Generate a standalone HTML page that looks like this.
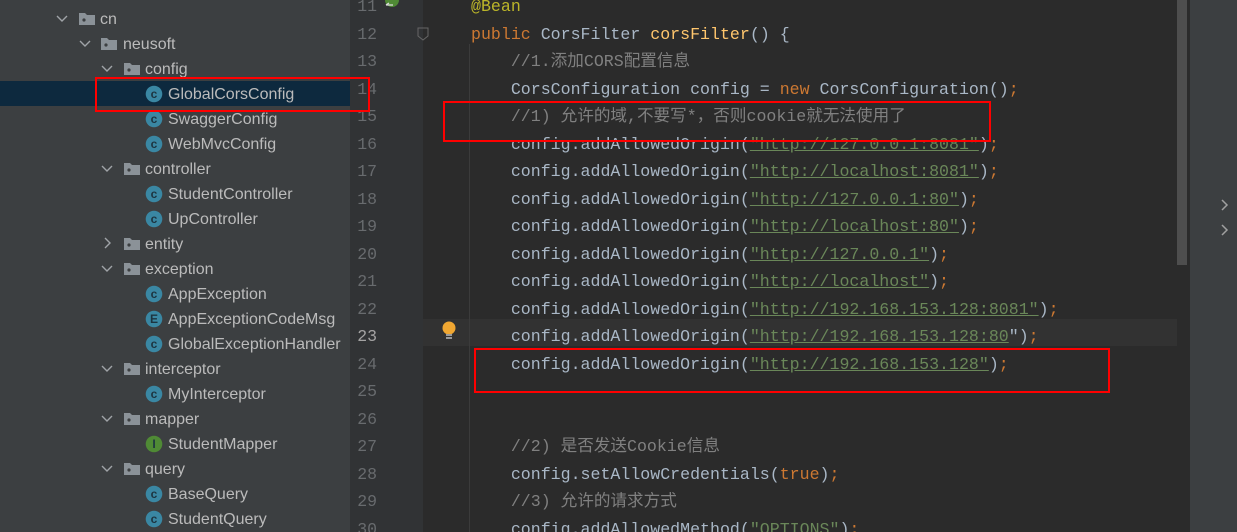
<!DOCTYPE html>
<html style="overflow:hidden"><head><meta charset="utf-8"><style>
*{margin:0;padding:0;box-sizing:border-box}
html,body{width:1237px;height:532px;overflow:hidden}
body{background:#2b2b2b;position:relative;font-family:"Liberation Sans","Noto Sans CJK SC",sans-serif}
#side{position:absolute;left:0;top:0;width:350px;height:532px;background:#3c3f41}
.sel{position:absolute;left:0;top:81px;width:350px;height:25px;background:#0d293e}
#gut{position:absolute;left:350px;top:0;width:73px;height:532px;background:#313335}
.ln{position:absolute;left:350px;width:27px;text-align:right;font:16.5px/27.5px "Liberation Mono",monospace;color:#686b6e}
.cl{position:absolute;left:471px;font:16.6px/27.5px "Liberation Mono","Noto Sans CJK SC",monospace;color:#a9b7c6;white-space:pre}
.k{color:#cc7832}.s{color:#6a8759;text-decoration:underline;text-decoration-color:#6a8759}.c{color:#808080}.a{color:#bbb529}.m{color:#ffc66d}
.box{position:absolute;border:2px solid #f00}
</style></head><body>
<div id="side">
<div class="sel"></div>
</div>
<div id="gut"></div>
<div style="position:absolute;left:423px;top:319px;width:754px;height:27px;background:#323232"></div>
<div style="position:absolute;left:469px;top:44px;width:1px;height:488px;background:#3b3b3b"></div>
<div style="position:absolute;left:1177px;top:0;width:10px;height:265px;background:#4e4e4e"></div>
<div style="position:absolute;left:1190px;top:0;width:47px;height:532px;background:#3c3f41"></div>
<svg style="position:absolute;left:1220px;top:198px" width="10" height="40"><path d="M2 2l5 5-5 5M2 27l5 5-5 5" stroke="#a0a0a0" stroke-width="1.5" fill="none"/></svg>

<svg style="position:absolute;left:0;top:0" width="350" height="532">
<g stroke="#a0a4a8" stroke-width="1.4" fill="none">
<path d="M57 16l5 5 5-5"/><path d="M80 41l5 5 5-5"/><path d="M102 66l5 5 5-5"/><path d="M102 166l5 5 5-5"/><path d="M105 238l5 5-5 5"/><path d="M102 266l5 5 5-5"/><path d="M102 366l5 5 5-5"/><path d="M102 416l5 5 5-5"/><path d="M102 466l5 5 5-5"/>
</g>
<g fill="#8b9298">
<path d="M79 13h6l2 2h8v10h-16z"/><path d="M101 38h6l2 2h8v10h-16z"/><path d="M124 63h6l2 2h8v10h-16z"/><path d="M124 163h6l2 2h8v10h-16z"/><path d="M124 238h6l2 2h8v10h-16z"/><path d="M124 263h6l2 2h8v10h-16z"/><path d="M124 363h6l2 2h8v10h-16z"/><path d="M124 413h6l2 2h8v10h-16z"/><path d="M124 463h6l2 2h8v10h-16z"/>
</g>
<g fill="#3c3f41"><circle cx="84" cy="20" r="1.6"/><circle cx="106" cy="45" r="1.6"/><circle cx="129" cy="70" r="1.6"/><circle cx="129" cy="170" r="1.6"/><circle cx="129" cy="245" r="1.6"/><circle cx="129" cy="270" r="1.6"/><circle cx="129" cy="370" r="1.6"/><circle cx="129" cy="420" r="1.6"/><circle cx="129" cy="470" r="1.6"/></g>
<g fill="#3a87a3"><circle cx="154" cy="94" r="8.3"/><circle cx="154" cy="119" r="8.3"/><circle cx="154" cy="144" r="8.3"/><circle cx="154" cy="194" r="8.3"/><circle cx="154" cy="219" r="8.3"/><circle cx="154" cy="294" r="8.3"/><circle cx="154" cy="319" r="8.3"/><circle cx="154" cy="344" r="8.3"/><circle cx="154" cy="394" r="8.3"/><circle cx="154" cy="494" r="8.3"/><circle cx="154" cy="519" r="8.3"/></g>
<circle cx="154" cy="444" r="8.3" fill="#4f8a35"/>
<g font-family="Liberation Sans" font-size="12" font-weight="bold" fill="#1d3440" text-anchor="middle"><text x="154" y="98">c</text><text x="154" y="123">c</text><text x="154" y="148">c</text><text x="154" y="198">c</text><text x="154" y="223">c</text><text x="154" y="298">c</text><text x="154" y="323">E</text><text x="154" y="348">c</text><text x="154" y="398">c</text><text x="154" y="448">I</text><text x="154" y="498">c</text><text x="154" y="523">c</text></g>
<g font-family="Liberation Sans" font-size="16" fill="#bbbbbb">
<text x="100" y="24">cn</text><text x="123" y="49">neusoft</text><text x="145" y="74">config</text>
<text x="168" y="99">GlobalCorsConfig</text><text x="168" y="124">SwaggerConfig</text><text x="168" y="149">WebMvcConfig</text>
<text x="145" y="174">controller</text><text x="168" y="199">StudentController</text><text x="168" y="224">UpController</text>
<text x="145" y="249">entity</text><text x="145" y="274">exception</text><text x="168" y="299">AppException</text><text x="168" y="324">AppExceptionCodeMsg</text><text x="168" y="349">GlobalExceptionHandler</text>
<text x="145" y="374">interceptor</text><text x="168" y="399">MyInterceptor</text><text x="145" y="424">mapper</text><text x="168" y="449">StudentMapper</text><text x="145" y="474">query</text><text x="168" y="499">BaseQuery</text><text x="168" y="524">StudentQuery</text>
</g>
</svg>

<div class="ln" style="top:-7px">11</div><div class="ln" style="top:21px">12</div><div class="ln" style="top:48px">13</div><div class="ln" style="top:76px">14</div><div class="ln" style="top:103px">15</div><div class="ln" style="top:131px">16</div><div class="ln" style="top:158px">17</div><div class="ln" style="top:186px">18</div><div class="ln" style="top:213px">19</div><div class="ln" style="top:241px">20</div><div class="ln" style="top:268px">21</div><div class="ln" style="top:296px">22</div><div class="ln" style="top:323px;color:#a4a3a3">23</div><div class="ln" style="top:351px">24</div><div class="ln" style="top:378px">25</div><div class="ln" style="top:406px">26</div><div class="ln" style="top:433px">27</div><div class="ln" style="top:461px">28</div><div class="ln" style="top:488px">29</div><div class="ln" style="top:516px">30</div>

<svg style="position:absolute;left:383px;top:-4px" width="18" height="16"><circle cx="9" cy="4" r="7" fill="#4f8a35"/><path d="M3 9h7M3 9l3-2" stroke="#ddd" stroke-width="1.3" fill="none"/></svg>
<svg style="position:absolute;left:417px;top:27px" width="12" height="14"><path d="M1 1h10v8l-5 4-5-4z" stroke="#666" fill="none"/></svg>
<svg style="position:absolute;left:441px;top:321px" width="16" height="20"><circle cx="8" cy="7" r="6.5" fill="#f0a732"/><rect x="5" y="13" width="6" height="2" fill="#999"/><rect x="5" y="16" width="6" height="2" fill="#999"/></svg>

<div class="cl" style="top:-7px"><span class="a">@Bean</span></div>
<div class="cl" style="top:21px"><span class="k">public </span>CorsFilter <span class="m">corsFilter</span>() {</div>
<div class="cl" style="top:48px">    <span class="c">//1.添加CORS配置信息</span></div>
<div class="cl" style="top:76px">    CorsConfiguration config = <span class="k">new </span>CorsConfiguration()<span class="k">;</span></div>
<div class="cl" style="top:103px">    <span class="c">//1) 允许的域,不要写*，否则cookie就无法使用了</span></div>
<div class="cl" style="top:131px">    config.addAllowedOrigin(<span class="s">"http://127.0.0.1:8081"</span>)<span class="k">;</span></div>
<div class="cl" style="top:158px">    config.addAllowedOrigin(<span class="s">"http://localhost:8081"</span>)<span class="k">;</span></div>
<div class="cl" style="top:186px">    config.addAllowedOrigin(<span class="s">"http://127.0.0.1:80"</span>)<span class="k">;</span></div>
<div class="cl" style="top:213px">    config.addAllowedOrigin(<span class="s">"http://localhost:80"</span>)<span class="k">;</span></div>
<div class="cl" style="top:241px">    config.addAllowedOrigin(<span class="s">"http://127.0.0.1"</span>)<span class="k">;</span></div>
<div class="cl" style="top:268px">    config.addAllowedOrigin(<span class="s">"http://localhost"</span>)<span class="k">;</span></div>
<div class="cl" style="top:296px">    config.addAllowedOrigin(<span class="s">"http://192.168.153.128:8081"</span>)<span class="k">;</span></div>
<div class="cl" style="top:323px">    config.addAllowedOrigin(<span class="s">"http://192.168.153.128:80</span>")<span class="k">;</span></div>
<div class="cl" style="top:351px">    config.addAllowedOrigin(<span class="s">"http://192.168.153.128"</span>)<span class="k">;</span></div>
<div class="cl" style="top:433px">    <span class="c">//2) 是否发送Cookie信息</span></div>
<div class="cl" style="top:461px">    config.setAllowCredentials(<span class="k">true</span>)<span class="k">;</span></div>
<div class="cl" style="top:488px">    <span class="c">//3) 允许的请求方式</span></div>
<div class="cl" style="top:516px">    config.addAllowedMethod(<span class="s" style="text-decoration:none">"OPTIONS"</span>)<span class="k">;</span></div>

<div class="box" style="left:95px;top:77px;width:275px;height:35px"></div>
<div class="box" style="left:443px;top:101px;width:548px;height:41px"></div>
<div class="box" style="left:474px;top:348px;width:636px;height:45px"></div>
</body></html>
